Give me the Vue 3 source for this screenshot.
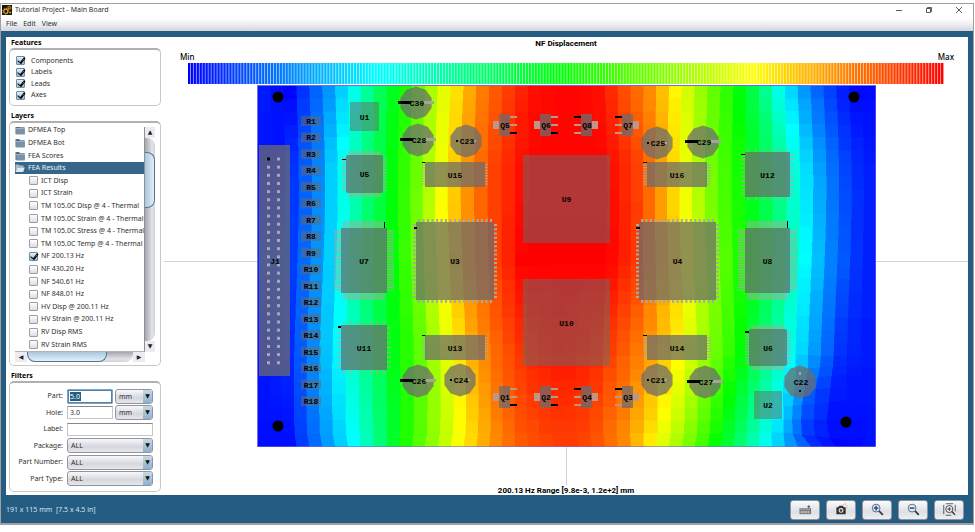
<script setup>
import { ref } from 'vue'

const features = ref([
  { name: 'Components', on: true },
  { name: 'Labels', on: true },
  { name: 'Leads', on: true },
  { name: 'Axes', on: true }
])
const layers = ref([
  { name: 'DFMEA Top', folder: true },
  { name: 'DFMEA Bot', folder: true },
  { name: 'FEA Scores', folder: true },
  { name: 'FEA Results', folder: true, selected: true },
  { name: 'ICT Disp' },
  { name: 'ICT Strain' },
  { name: 'TM 105.0C Disp @ 4 - Thermal' },
  { name: 'TM 105.0C Strain @ 4 - Thermal' },
  { name: 'TM 105.0C Stress @ 4 - Thermal' },
  { name: 'TM 105.0C Temp @ 4 - Thermal' },
  { name: 'NF 200.13 Hz', on: true },
  { name: 'NF 430.20 Hz' },
  { name: 'NF 540.61 Hz' },
  { name: 'NF 848.01 Hz' },
  { name: 'HV Disp @ 200.11 Hz' },
  { name: 'HV Strain @ 200.11 Hz' },
  { name: 'RV Disp RMS' },
  { name: 'RV Strain RMS' }
])
const part = ref('5.0')
const hole = ref('3.0')
const label = ref('')
const selects = ['Package', 'Part Number', 'Part Type']

/* ---------- colour scale ---------- */
const hue = t => `hsl(${Math.round(240 * (1 - Math.max(0, Math.min(1, t))))} 100% 50%)`
const legend = Array.from({ length: 255 }, (_, i) => ({ x: i * 3, c: hue(i / 254) }))

/* ---------- displacement field: per row, [x, value] samples ---------- */
const field = [
  [86, [[258, 0.03], [292, 0], [306, 0.06], [325, 0.125], [338, 0.18], [352, 0.25], [372, 0.375], [393, 0.47], [405, 0.52], [423, 0.625], [450, 0.75], [480, 0.87], [500, 0.92], [530, 0.985], [566, 1], [600, 0.985], [625, 0.92], [650, 0.86], [675, 0.76], [707, 0.625], [738, 0.5], [760, 0.4], [778, 0.27], [809, 0.12], [840, 0.03], [858, 0], [876, 0.01]]],
  [165, [[258, 0.02], [280, 0.02], [300, 0.08], [318, 0.14], [335, 0.24], [365, 0.375], [393, 0.49], [418, 0.6], [447, 0.75], [473, 0.87], [497, 0.94], [527, 0.995], [605, 0.995], [636, 0.94], [655, 0.88], [685, 0.75], [712, 0.62], [745, 0.5], [775, 0.38], [797, 0.25], [823, 0.13], [848, 0.05], [876, 0.02]]],
  [260, [[258, 0.04], [290, 0.06], [314, 0.14], [335, 0.23], [360, 0.375], [390, 0.48], [416, 0.6], [443, 0.75], [466, 0.85], [497, 0.94], [522, 1], [608, 1], [636, 0.95], [655, 0.875], [688, 0.75], [716, 0.625], [748, 0.5], [780, 0.38], [804, 0.25], [829, 0.13], [855, 0.05], [876, 0.02]]],
  [350, [[258, 0.02], [290, 0.04], [314, 0.13], [340, 0.24], [370, 0.375], [395, 0.49], [418, 0.59], [447, 0.74], [475, 0.85], [500, 0.91], [530, 0.965], [566, 0.985], [600, 0.965], [643, 0.87], [680, 0.75], [703, 0.65], [740, 0.5], [770, 0.37], [798, 0.24], [820, 0.14], [845, 0.04], [876, 0.02]]],
  [446, [[258, 0.01], [294, 0.01], [304, 0.06], [322, 0.125], [355, 0.25], [381, 0.385], [402, 0.51], [430, 0.63], [460, 0.75], [497, 0.87], [520, 0.91], [545, 0.93], [566, 0.94], [590, 0.93], [625, 0.86], [652, 0.76], [690, 0.61], [715, 0.5], [742, 0.38], [768, 0.25], [794, 0.13], [818, 0.03], [845, 0], [876, 0.02]]]
]
const along = (pts, x) => {
  for (let i = 1; i < pts.length; i++) {
    if (x <= pts[i][0]) {
      const [x0, v0] = pts[i - 1]
      const [x1, v1] = pts[i]
      return v0 + (v1 - v0) * (x - x0) / (x1 - x0)
    }
  }
  return pts[pts.length - 1][1]
}
const value = (x, y) => {
  let k = 1
  while (k < field.length - 1 && y > field[k][0]) k++
  const f = (y - field[k - 1][0]) / (field[k][0] - field[k - 1][0])
  return along(field[k - 1][1], x) * (1 - f) + along(field[k][1], x) * f
}

/* ---------- finite element mesh ---------- */
const B = { x: 258, y: 86, w: 617, h: 360 }
const COLS = 48
const ROWS = 28
const vertex = (i, j) => {
  let x = B.x + B.w * i / COLS
  let y = B.y + B.h * j / ROWS
  if (i > 0 && i < COLS && j > 0 && j < ROWS) {
    x += 3 * Math.sin(i * 0.32) * Math.sin(j * 0.2)
    y += 1.5 * Math.sin(i * 0.4 + 1) * Math.sin(j * 0.11)
    const dx = x - 846
    const dy = y - 421
    const d = Math.hypot(dx, dy)
    if (d < 62 && d > 0) {
      const push = Math.min(7, (62 - d) * 0.3)
      if (y + dy / d * push < B.y + B.h - 2 && x + dx / d * push < B.x + B.w - 2) {
        x += dx / d * push
        y += dy / d * push
      }
    }
  }
  return [x.toFixed(1), y.toFixed(1)]
}
const cells = []
for (let j = 0; j < ROWS; j++) {
  for (let i = 0; i < COLS; i++) {
    const cx = B.x + B.w * (i + 0.5) / COLS
    const cy = B.y + B.h * (j + 0.5) / ROWS
    cells.push({
      p: [vertex(i, j), vertex(i + 1, j), vertex(i + 1, j + 1), vertex(i, j + 1)].map(v => v.join(',')).join(' '),
      c: hue(value(cx, cy))
    })
  }
}

/* ---------- board parts ---------- */
const holes = [[278, 97], [854, 97], [278, 426], [846, 422]]
const resistors = Array.from({ length: 18 }, (_, i) => ({ name: 'R' + (i + 1), y: 121 + i * 280 / 17 }))
const pins = Array.from({ length: 26 }, (_, i) => 159 + i * 8.15)

const chips = [
  { n: 'U1', x: 350, y: 102, w: 29, h: 29, light: true },
  { n: 'U2', x: 754, y: 391, w: 28, h: 28, light: true },
  { n: 'U9', x: 523, y: 155, w: 87, h: 88, light: true },
  { n: 'U10', x: 523, y: 279, w: 87, h: 87, light: true },
  { n: 'U5', x: 346, y: 155, w: 37, h: 38, r: 2, v: 16, s: 12, len: 4, mark: [342, 159, 4, 1] },
  { n: 'U6', x: 749, y: 329, w: 38, h: 37, r: 2, v: 16, s: 12, len: 4, mark: [745, 331, 4, 2] },
  { n: 'U7', x: 341, y: 228, w: 46, h: 65, v: 20, s: 24, len: 7, mark: [384, 222, 1, 6] },
  { n: 'U8', x: 745, y: 228, w: 45, h: 65, v: 20, s: 24, len: 7, mark: [787, 221, 1, 7] },
  { n: 'U11', x: 341, y: 325, w: 46, h: 45, v: 7, s: 9, len: 4, mark: [338, 326, 3, 2] },
  { n: 'U12', x: 745, y: 152, w: 45, h: 45, v: 6, s: 10, len: 4, mark: [741, 154, 4, 1] },
  { n: 'U3', x: 416, y: 222, w: 78, h: 78, v: 17, s: 18, len: 3, thick: 2, mark: [414, 227, 3, 2] },
  { n: 'U4', x: 639, y: 222, w: 77, h: 78, v: 17, s: 18, len: 3, thick: 2, mark: [636, 227, 4, 2] },
  { n: 'U13', x: 425, y: 335, w: 60, h: 25, v: 0, s: 8, len: 3, mark: [422, 335, 3, 1] },
  { n: 'U14', x: 647, y: 335, w: 60, h: 25, v: 0, s: 8, len: 4, mark: [643, 335, 4, 1] },
  { n: 'U15', x: 425, y: 162, w: 60, h: 25, v: 0, s: 8, len: 3, mark: [422, 162, 3, 1] },
  { n: 'U16', x: 647, y: 162, w: 60, h: 25, v: 0, s: 8, len: 4, mark: [643, 162, 4, 1] }
]
const leads = c => {
  if (!c.len) return ''
  let d = ''
  const inset = 3
  for (let i = 0; i < c.v; i++) {
    const x = c.x + inset + (c.w - inset * 2) * i / (c.v - 1)
    d += `M${x.toFixed(1)} ${c.y - c.len}v${c.len}M${x.toFixed(1)} ${c.y + c.h}v${c.len}`
  }
  for (let i = 0; i < c.s; i++) {
    const y = c.y + inset + (c.h - inset * 2) * i / (c.s - 1)
    d += `M${c.x - c.len} ${y.toFixed(1)}h${c.len}M${c.x + c.w} ${y.toFixed(1)}h${c.len}`
  }
  return d
}

const caps = [
  { n: 'C30', x: 416, y: 103, bar: true },
  { n: 'C28', x: 418, y: 140, bar: true },
  { n: 'C29', x: 703, y: 142, bar: true },
  { n: 'C26', x: 418, y: 381, bar: true },
  { n: 'C27', x: 705, y: 382, bar: true },
  { n: 'C23', x: 466, y: 141 },
  { n: 'C25', x: 657, y: 143 },
  { n: 'C24', x: 460, y: 380 },
  { n: 'C21', x: 657, y: 380 },
  { n: 'C22', x: 800, y: 382, vertical: true }
]
const decagon = (x, y) => Array.from({ length: 10 }, (_, i) => {
  const a = Math.PI * (i / 5 - 0.5)
  return `${(x + 16.4 * Math.cos(a)).toFixed(1)},${(y + 16.4 * Math.sin(a)).toFixed(1)}`
}).join(' ')

const transistors = [
  { n: 'Q5', x: 499, y: 114 }, { n: 'Q6', x: 540, y: 114 },
  { n: 'Q8', x: 581, y: 114, flip: true }, { n: 'Q7', x: 622, y: 114, flip: true },
  { n: 'Q1', x: 499, y: 386 }, { n: 'Q2', x: 540, y: 386 },
  { n: 'Q4', x: 581, y: 386, flip: true }, { n: 'Q3', x: 622, y: 386, flip: true }
]
</script>

<template>
  <div class="screen">
    <div class="window">
      <header class="titlebar">
        <svg class="appicon" viewBox="0 0 10 10" aria-hidden="true">
          <rect width="10" height="10" fill="#17130c" />
          <circle cx="3.8" cy="6.2" r="2.1" fill="none" stroke="#e0a020" stroke-width="1.2" />
          <circle cx="3.8" cy="6.2" r="3" fill="none" stroke="#e0a020" stroke-width="1" stroke-dasharray="1 1.35" />
          <circle cx="7.3" cy="2.8" r="1.2" fill="none" stroke="#e0a020" stroke-width="1" />
          <circle cx="7.3" cy="2.8" r="2" fill="none" stroke="#e0a020" stroke-width=".7" stroke-dasharray=".8 .8" />
          <path d="M7 7.6h2.4M8.2 6.4v2.4" stroke="#e0a020" stroke-width=".8" />
        </svg>
        <h1>Tutorial Project - Main Board</h1>
        <div class="winbtns">
          <button type="button" aria-label="Minimize"><svg viewBox="0 0 8 8"><path d="M1 4.5h6" /></svg></button>
          <button type="button" aria-label="Restore"><svg viewBox="0 0 8 8"><path d="M1.5 2.5h4v4h-4zM2.5 2.5v-1h4v4h-1" /></svg></button>
          <button type="button" aria-label="Close"><svg viewBox="0 0 8 8"><path d="M1 1l6 6M7 1l-6 6" /></svg></button>
        </div>
      </header>
      <nav class="menubar">
        <button type="button">File</button>
        <button type="button">Edit</button>
        <button type="button">View</button>
      </nav>

      <main class="pane">
        <aside class="sidebar">
          <section>
            <h2>Features</h2>
            <div class="box features">
              <label v-for="f in features" :key="f.name">
                <input v-model="f.on" type="checkbox">{{ f.name }}
              </label>
            </div>
          </section>

          <section class="grow">
            <h2>Layers</h2>
            <div class="box layers">
              <div class="list">
                <div class="rows">
                  <template v-for="l in layers" :key="l.name">
                    <div v-if="l.folder" class="row folder" :class="{ selected: l.selected }">
                      <svg viewBox="0 0 10 10" aria-hidden="true">
                        <template v-if="l.selected">
                          <path d="M.5 8.5v-7h3l1 1h4v2h-6z" fill="#a9bccb" />
                          <path d="M2.5 4.5h7.3l-1.6 4.5H.5z" fill="#dfe8ee" />
                        </template>
                        <template v-else>
                          <path d="M.5 9V1h3.6l1 1.2h4.4V9z" fill="#50708d" />
                          <path d="M1.2 9.6V4l8.6-.4v6z" fill="#7892aa" />
                          <path d="M1 3.6l8.3-.3" stroke="#c4d1dc" stroke-width=".7" />
                        </template>
                      </svg>
                      <span>{{ l.name }}</span>
                    </div>
                    <label v-else class="row"><input v-model="l.on" type="checkbox"><span>{{ l.name }}</span></label>
                  </template>
                </div>
              </div>
              <div class="vbar"><i class="arrow">▲</i><i class="track"><b /></i><i class="arrow">▼</i></div>
              <div class="hbar"><i class="arrow">◀</i><i class="track"><b /></i><i class="arrow">▶</i></div>
            </div>
          </section>

          <section>
            <h2>Filters</h2>
            <form class="box filters" @submit.prevent>
              <label for="part">Part:</label>
              <div class="pair">
                <div class="focusbox">
                  <input id="part" v-model="part" type="text" class="selectedtext">
                </div>
                <div class="combo"><select aria-label="Part unit"><option>mm</option></select></div>
              </div>
              <label for="hole">Hole:</label>
              <div class="pair">
                <input id="hole" v-model="hole" type="text">
                <div class="combo"><select aria-label="Hole unit"><option>mm</option></select></div>
              </div>
              <label for="label">Label:</label>
              <input id="label" v-model="label" type="text">
              <template v-for="s in selects" :key="s">
                <label :for="s">{{ s }}:</label>
                <div class="combo"><select :id="s"><option>ALL</option></select></div>
              </template>
            </form>
          </section>
        </aside>

        <section class="stage">
          <h2 class="caption">NF Displacement</h2>
          <div class="ends"><span>Min</span><span>Max</span></div>
          <svg class="legend" viewBox="0 0 765 21" preserveAspectRatio="none" aria-hidden="true">
            <g v-for="s in legend" :key="s.x">
              <rect :x="s.x" y="0" width="3.2" height="21" :fill="s.c" />
              <rect :x="s.x + 2" y="0" width="1" height="21" fill="#fff" fill-opacity=".6" />
            </g>
          </svg>
          <svg class="plot" viewBox="164 84 804 401">
            <path d="M164 261.5H968M566.5 440V485" stroke="#d4d4d4" />
            <rect x="257" y="85" width="619" height="362" fill="#7a68e0" />
            <g shape-rendering="crispEdges">
              <polygon v-for="(c, i) in cells" :key="i" :points="c.p" :fill="c.c" :stroke="c.c" stroke-width=".4" />
            </g>
            <circle v-for="(h, i) in holes" :key="'h' + i" :cx="h[0]" :cy="h[1]" r="5.5" />

            <g v-for="r in resistors" :key="r.name">
              <rect x="301" :y="r.y - 5" width="20" height="10" class="light" />
              <text x="311" :y="r.y + 3">{{ r.name }}</text>
            </g>

            <rect x="259" y="145" width="31" height="231" class="body" />
            <g v-for="(y, i) in pins" :key="'p' + i" fill="#a6a8b4">
              <rect x="267" :y="y - 1.5" width="3" height="3" :fill="i ? '#a6a8b4' : '#000'" />
              <rect x="277" :y="y - 1.5" width="3" height="3" />
            </g>
            <text x="275" y="264">J1</text>

            <g v-for="c in chips" :key="c.n">
              <path v-if="c.len" :d="leads(c)" class="lead" :stroke-width="c.thick || 1" />
              <rect :x="c.x" :y="c.y" :width="c.w" :height="c.h" :rx="c.r || 0" :class="c.light ? 'light' : 'body'" />
              <rect v-if="c.mark" :x="c.mark[0]" :y="c.mark[1]" :width="c.mark[2]" :height="c.mark[3]" />
              <text :x="c.x + c.w / 2" :y="c.y + c.h / 2 + 3">{{ c.n }}</text>
            </g>

            <g v-for="c in caps" :key="c.n">
              <polygon :points="decagon(c.x, c.y)" class="body" />
              <template v-if="c.bar">
                <rect :x="c.x - 18" :y="c.y - 2" width="13" height="3" />
                <rect :x="c.x + 7" :y="c.y - 2" width="11" height="3" fill="#a5a69b" />
              </template>
              <template v-else-if="c.vertical">
                <rect :x="c.x - 1" :y="c.y + 8" width="2" height="2" />
                <rect :x="c.x - 1" :y="c.y - 10" width="2" height="3" fill="#a5a69b" />
              </template>
              <template v-else>
                <rect :x="c.x - 10" :y="c.y - 1" width="2" height="2" />
                <rect :x="c.x + 8" :y="c.y - 1" width="2" height="2" fill="#a5a69b" />
              </template>
              <text :x="c.x + 1" :y="c.y + 3">{{ c.n }}</text>
            </g>

            <g v-for="q in transistors" :key="q.n">
              <rect :x="q.x" :y="q.y" width="11" height="22" class="body" />
              <rect :x="q.flip ? q.x + 11 : q.x - 6" :y="q.y + 7" width="6" height="8" class="pad" />
              <rect
                v-for="k in 3" :key="k"
                :x="q.flip ? q.x - 7 : q.x + 11" :y="q.y + k * 8 - 6" width="7" height="2"
                :class="k === (q.flip ? 1 : 3) ? 'first' : 'pad'"
              />
              <text :x="q.x + 6" :y="q.y + 14">{{ q.n }}</text>
            </g>
          </svg>
          <p class="caption range">200.13 Hz Range [9.8e-3, 1.2e+2] mm</p>
        </section>
      </main>

      <footer class="status">
        <p>191 x 115 mm&nbsp; [7.5 x 4.5 in]</p>
        <div class="tools">
          <button type="button" aria-label="Measure">
            <svg viewBox="0 0 14 14">
              <rect x=".5" y="5.5" width="12.5" height="6.5" fill="#777" />
              <path d="M2.5 11V8.5M4.5 11V8.5M6.5 11V8.5M8.5 11V8.5M10.5 11V8.5" stroke="#ddd" />
              <path d="M1 6.5h11" stroke="#bbb" />
              <path d="M9 4h3M10.5 2.5v3" stroke="#444" />
            </svg>
          </button>
          <button type="button" aria-label="Snapshot">
            <svg viewBox="0 0 14 14">
              <path d="M1.5 4.5h2l1-1.5h4l1 1.5h2v7.5h-10z" fill="#333" />
              <circle cx="6.5" cy="8" r="2.6" fill="#eee" />
              <circle cx="6.5" cy="8" r="1.4" fill="#333" />
              <path d="M9.5 2.5l-1-1.5M11 2l.3-1.7M12 3.3l1.6-.7M12 5l1.4.6" stroke="#e8a25a" stroke-width=".9" />
            </svg>
          </button>
          <button type="button" aria-label="Zoom in">
            <svg viewBox="0 0 14 14">
              <path d="M8.3 8.3l4.4 4.4" stroke="#333" stroke-width="1.8" />
              <circle cx="5.5" cy="5.5" r="4.2" fill="#dfeaf6" stroke="#666" />
              <path d="M5.5 3v5M3 5.5h5" stroke="#1c5fb0" stroke-width="1.8" />
            </svg>
          </button>
          <button type="button" aria-label="Zoom out">
            <svg viewBox="0 0 14 14">
              <path d="M8.3 8.3l4.4 4.4" stroke="#333" stroke-width="1.8" />
              <circle cx="5.5" cy="5.5" r="4.2" fill="#dfeaf6" stroke="#666" />
              <path d="M3 5.5h5" stroke="#1c5fb0" stroke-width="1.8" />
            </svg>
          </button>
          <button type="button" aria-label="Zoom to fit">
            <svg viewBox="0 0 14 14">
              <path d="M3 .8h8M3 13.2h6M.8 2v10M13.2 2v7" stroke="#555" />
              <circle cx="6.8" cy="6.5" r="3.8" fill="#eee" stroke="#444" />
              <path d="M9.5 9.2l3.4 3.6" stroke="#333" stroke-width="1.5" />
              <path d="M6.8 4.5v4M4.8 6.5h4" stroke="#333" />
            </svg>
          </button>
        </div>
      </footer>
    </div>
  </div>
</template>

<style>
body {
  margin: 0;
  background: #fff;
}
</style>

<style scoped>
.screen,
.screen * {
  box-sizing: border-box;
}
.screen {
  height: 100vh;
  padding: 3px 1px 7px 0;
  font: 7px/10px "Noto Sans", "Open Sans", sans-serif;
  color: #303030;
}
.window {
  height: 100%;
  display: flex;
  flex-direction: column;
  border: 1px solid #a0a0a0;
  border-bottom: 2px solid #a0a0a0;
  background: #245c82;
}
h1,
h2,
p {
  margin: 0;
  font-size: 7px;
  line-height: 10px;
}
button,
input,
select {
  font: inherit;
  color: inherit;
  margin: 0;
  padding: 0;
  min-width: 0;
}

/* title bar and menu */
.titlebar {
  flex: none;
  height: 14px;
  display: flex;
  align-items: center;
  gap: 3px;
  padding: 0 10px 2px 1px;
  background: #fff;
}
.titlebar h1 {
  flex: 1;
  font-weight: 400;
}
.appicon {
  width: 10px;
  height: 10px;
}
.winbtns {
  display: flex;
  gap: 22px;
}
.winbtns button {
  width: 8px;
  height: 8px;
  border: 0;
  background: none;
}
.winbtns svg {
  display: block;
  width: 8px;
  height: 8px;
  fill: none;
  stroke: #333;
  stroke-width: 0.8;
}
.menubar {
  flex: none;
  height: 13px;
  display: flex;
  gap: 6px;
  padding: 0 5px 1px;
  background: linear-gradient(#fff, #f0f0f3 45%, #d3d4dc);
}
.menubar button {
  border: 0;
  background: none;
}

/* white work area */
.pane {
  flex: 1;
  min-height: 0;
  display: flex;
  margin: 6px 5px 0;
  background: #fff;
}
.sidebar {
  flex: none;
  width: 158px;
  display: flex;
  flex-direction: column;
  gap: 5px;
  padding: 1px 3px 3px;
}
.sidebar section {
  display: flex;
  flex-direction: column;
}
.sidebar .grow {
  flex: 1;
  min-height: 0;
}
.sidebar h2 {
  padding-left: 2px;
  color: #000;
  font-weight: 700;
}
.box {
  border: 1px solid #c8c8c8;
  border-top: 2px solid #b0b0b0;
  border-radius: 5px;
  width: 152px;
}

/* tick boxes */
input[type='checkbox'] {
  appearance: none;
  flex: none;
  width: 9px;
  height: 9px;
  border: 1px solid #9a9da6;
  border-radius: 1px;
  background: linear-gradient(#fff, #dcdde4);
  position: relative;
}
input[type='checkbox']:checked {
  border-color: #6d8ba3;
  background: linear-gradient(#e0edf7, #9fbdd3);
}
input[type='checkbox']:checked::after {
  content: '';
  position: absolute;
  left: 2px;
  top: -1px;
  width: 3px;
  height: 6px;
  border: solid #000;
  border-width: 0 1px 1px 0;
  box-shadow: 1px 0 0 #000;
  transform: rotate(38deg);
}
.features {
  height: 58px;
  display: grid;
  grid-auto-rows: 1fr;
  padding: 5px 6px 4px;
}
.features label {
  display: flex;
  align-items: center;
  gap: 6px;
}

/* layer list */
.layers {
  flex: 1;
  min-height: 0;
  display: grid;
  grid-template-columns: 1fr 10px;
  grid-template-rows: 1fr 10px;
  padding: 4px 5px 3px;
}
.list {
  overflow: hidden;
  min-width: 0;
  min-height: 0;
  display: flex;
  align-items: flex-end;
  border-right: 1px solid #8c9098;
  border-bottom: 1px solid #b0b2b8;
}
.rows {
  width: 100%;
  height: calc(100% + 3px);
  flex: none;
  display: grid;
  grid-template-columns: 100%;
  grid-auto-rows: 1fr;
}
.row {
  display: flex;
  align-items: center;
  gap: 3px;
  padding-left: 14px;
  white-space: nowrap;
  overflow: hidden;
  min-height: 0;
}
.row.folder {
  padding-left: 0;
}
.row svg {
  flex: none;
  width: 10px;
  height: 10px;
}
.row.selected {
  background: #36678a;
  color: #eef4f8;
}
.vbar,
.hbar {
  display: flex;
  min-width: 0;
  min-height: 0;
}
.vbar {
  flex-direction: column;
}
.arrow {
  flex: none;
  width: 10px;
  height: 11px;
  font: 6px/10px "DejaVu Sans", sans-serif;
  text-align: center;
  color: #222;
  background: #ececf0;
}
.hbar .arrow {
  width: 12px;
  height: 10px;
}
.track {
  flex: 1;
  display: flex;
  background: linear-gradient(90deg, #a5a7ae, #e2e3e8 70%, #d2d3d9);
}
.hbar .track {
  background: linear-gradient(#a5a7ae, #e2e3e8 70%, #d2d3d9);
  border-radius: 0 0 8px 8px;
}
.vbar .track {
  flex-direction: column;
  border-radius: 0 8px 8px 0;
}
.track b {
  border: 1px solid #54758f;
}
.vbar b {
  margin-top: 14px;
  height: 56px;
  border-left: 0;
  border-radius: 0 8px 8px 0;
  background: linear-gradient(90deg, #a9c6dc, #e3f1fa);
}
.hbar b {
  width: 75%;
  border-top: 0;
  border-radius: 0 0 8px 8px;
  background: linear-gradient(#a9c6dc, #e3f1fa);
}

/* filters */
.filters {
  height: 111px;
  display: grid;
  grid-template-columns: 48px 86px;
  grid-auto-rows: 1fr;
  column-gap: 4px;
  align-items: center;
  padding: 5px 5px 4px;
}
.filters label {
  text-align: right;
}
.pair {
  display: grid;
  grid-template-columns: 46px 38px;
  gap: 2px;
  align-items: center;
}
.filters input {
  width: 100%;
  height: 13px;
  padding: 0 2px;
  border: 1px solid #c4c6cc;
  border-top-color: #888;
  background: #fff;
}
.focusbox {
  border: 1px solid #7ea6c8;
  border-radius: 1px;
}
.filters .selectedtext {
  display: block;
  border-color: #5681a3;
  padding: 0 1px;
  color: #fff;
  background: linear-gradient(#245c82, #245c82) 1px 1px / 11px 9px no-repeat #fff;
}
.combo {
  position: relative;
  display: flex;
}
.combo select {
  appearance: none;
  width: 100%;
  height: 15px;
  padding: 1px 3px 0;
  border: 1px solid #9295a0;
  border-radius: 3px;
  background: linear-gradient(#f8f8fa, #d6d7de 60%, #e6e7ec);
}
.combo::after {
  content: '▼';
  position: absolute;
  right: 1px;
  top: 1px;
  bottom: 1px;
  width: 9px;
  border-radius: 0 2px 2px 0;
  font: 6px/12px "DejaVu Sans", sans-serif;
  text-align: center;
  color: #111;
  background: linear-gradient(#c6d8e6, #8fb0c9);
  pointer-events: none;
}

/* result view */
.stage {
  flex: 1;
  min-width: 0;
  display: flex;
  flex-direction: column;
}
.caption {
  flex: none;
  font: bold 8px/13px Roboto, "Liberation Sans", sans-serif;
  text-align: center;
  color: #000;
}
.caption.range {
  line-height: 10px;
  padding-top: 1px;
  height: 10px;
}
.ends {
  flex: none;
  display: flex;
  justify-content: space-between;
  padding: 0 14px 0 16px;
  font: 500 8px/13px "Noto Sans", sans-serif;
  color: #000;
}
.legend {
  flex: none;
  display: block;
  height: 21px;
  margin: 0 24px;
}
.plot {
  flex: 1;
  display: block;
  min-height: 0;
  width: 100%;
}
.plot text {
  font: bold 8px "Liberation Mono", monospace;
  text-anchor: middle;
  fill: #000;
}
.body {
  fill: rgba(108, 108, 108, 0.74);
}
.light {
  fill: rgba(105, 105, 105, 0.51);
}
.lead {
  stroke: #a6aaa0;
  fill: none;
}
.pad {
  fill: #c29484;
}
.first {
  fill: #000;
}

/* status bar */
.status {
  flex: none;
  height: 28px;
  display: flex;
  align-items: center;
  justify-content: space-between;
  padding: 1px 9px 0 5px;
  color: #d5e3ec;
}
.tools {
  display: flex;
  gap: 6px;
}
.tools button {
  display: flex;
  align-items: center;
  justify-content: center;
  width: 30px;
  height: 20px;
  border: 1px solid #8f939d;
  border-radius: 3px;
  background: linear-gradient(#fafafc, #dddfe6 60%, #eeeff3);
}
.tools svg {
  width: 13px;
  height: 13px;
  fill: none;
}
</style>
